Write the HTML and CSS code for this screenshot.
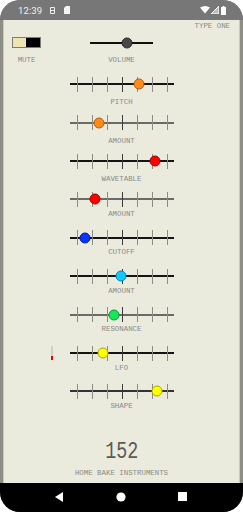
FILE: index.html
```html
<!DOCTYPE html>
<html>
<head>
<meta charset="utf-8">
<link rel="stylesheet" href="styles.css">
</head>
<body>
<div class="phone">
  <div class="status">
    <span class="time">12:39</span>
    <svg class="ic-debug" width="7" height="9" viewBox="0 0 7 9"><path d="M1.5 1.5h4M1 4.5h5M1.5 7.5h4M1.5 1.5v6M5.5 1.5v6" stroke="#eee" stroke-width="1" fill="none"/></svg>
    <svg class="ic-sd" width="6" height="8" viewBox="0 0 6 8"><path d="M2 0h4v8h-6v-6z" fill="#f4f4f4"/></svg>
    <span class="spacer"></span>
    <svg width="10" height="8" viewBox="0 0 10 8"><path d="M0 1.5Q5 -1.5 10 1.5L5 7.5Z" fill="#fff"/></svg>
    <svg class="ic-sig" width="8" height="8" viewBox="0 0 8 8"><path d="M8 0V8H0Z" fill="#bdbdbd"/><path d="M8 0V8H0Z" fill="none" stroke="#fff" stroke-width="1"/></svg>
    <svg class="ic-bat" width="5" height="9" viewBox="0 0 5 9"><path d="M1.5 0h2v1h1.5v8h-5v-8h1.5z" fill="#fff"/></svg>
  </div>
  <main class="app">
    <div class="type">TYPE ONE</div>
    <div class="toprow">
      <div class="mute">
        <div class="switch"><span class="on"></span><span class="off"></span></div>
        <div class="label">MUTE</div>
      </div>
      <div class="volume">
        <div class="vtrack"><span class="knob k-gray" style="left:37px"></span></div>
        <div class="label">VOLUME</div>
      </div>
    </div>
    <div class="sliders">
      <div class="slider first">
        <div class="track dark"><span class="knob k-orange" style="left:69px"></span></div>
        <div class="label">PITCH</div>
      </div>
      <div class="slider first">
        <div class="track light"><span class="knob k-orange" style="left:29px"></span></div>
        <div class="label">AMOUNT</div>
      </div>
      <div class="slider first">
        <div class="track dark"><span class="knob k-red" style="left:85px"></span></div>
        <div class="label">WAVETABLE</div>
      </div>
      <div class="slider">
        <div class="track light"><span class="knob k-red" style="left:25px"></span></div>
        <div class="label">AMOUNT</div>
      </div>
      <div class="slider">
        <div class="track dark"><span class="knob k-blue" style="left:15px"></span></div>
        <div class="label">CUTOFF</div>
      </div>
      <div class="slider">
        <div class="track dark"><span class="knob k-cyan" style="left:51px"></span></div>
        <div class="label">AMOUNT</div>
      </div>
      <div class="slider">
        <div class="track light"><span class="knob k-green" style="left:44px"></span></div>
        <div class="label">RESONANCE</div>
      </div>
      <div class="slider">
        <div class="track dark"><span class="lfo-meter"></span><span class="knob k-yellow" style="left:33px"></span></div>
        <div class="label">LFO</div>
      </div>
      <div class="slider">
        <div class="track mid"><span class="knob k-yellow" style="left:87px"></span></div>
        <div class="label">SHAPE</div>
      </div>
    </div>
    <div class="footer">
      <div class="bpm">152</div>
      <div class="brand">HOME BAKE INSTRUMENTS</div>
    </div>
  </main>
  <div class="nav">
    <svg width="8" height="10" viewBox="0 0 8 10"><path d="M8 0V10L0 5Z" fill="#fff"/></svg>
    <svg width="10" height="10" viewBox="0 0 10 10"><circle cx="5" cy="5" r="4.6" fill="#fff"/></svg>
    <svg width="9" height="9" viewBox="0 0 9 9"><rect width="9" height="9" fill="#fff"/></svg>
  </div>
</div>
</body>
</html>
```
FILE: styles.css
```css
* { box-sizing: border-box; }
html, body { margin: 0; padding: 0; background: #fff; }
.phone {
  width: 243px;
  height: 512px;
  border-radius: 20px;
  overflow: hidden;
  display: flex;
  flex-direction: column;
  background: #777;
}
.status {
  height: 20px;
  flex: none;
  background: #777;
  display: flex;
  align-items: center;
  padding: 0 17px 0 18px;
  color: #f2f2f2;
  font-family: Roboto, "Noto Sans", sans-serif;
  font-size: 9.5px;
}
.status .time { margin-right: 7px; letter-spacing: 0.1px; }
.status .ic-debug { margin-right: 8px; }
.status .spacer { flex: 1; }
.status .ic-sig { margin-left: 1px; margin-right: 2px; }
.status svg { display: block; }

.app {
  flex: none;
  height: 463px;
  background: #ebebdd;
  border-left: 3px solid #8e8e86;
  border-right: 3px solid #8e8e86;
  box-shadow: inset 1px 0 0 #c9c9bc, inset -1px 0 0 #c9c9bc;
  display: flex;
  flex-direction: column;
  font-family: "Liberation Mono", "DejaVu Sans Mono", monospace;
  font-size: 7.4px;
  color: #8a8a86;
}
.label, .type, .brand { line-height: 8px; white-space: nowrap; }
.type {
  text-align: right;
  padding-right: 10px;
  margin-top: 2px;
}
.toprow {
  display: grid;
  grid-template-columns: 1fr auto 1fr;
  height: 46.3px;
}
.mute {
  justify-self: start;
  margin-left: 9px;
  display: flex;
  flex-direction: column;
  align-items: center;
  width: 29px;
}
.switch {
  margin-top: 7px;
  width: 29px;
  height: 11px;
  border: 1px solid #7d7d74;
  display: flex;
}
.switch .on { flex: 1; background: #f0e4b2; }
.switch .off { flex: 1.1; background: #000; }
.mute .label { margin-top: 8px; }
.volume {
  display: flex;
  flex-direction: column;
  align-items: center;
}
.vtrack {
  position: relative;
  margin-top: 5px;
  width: 63px;
  height: 16px;
  background: linear-gradient(#111, #111) no-repeat 0 7px / 100% 2px;
}
.volume .label { margin-top: 5px; }

.sliders { display: flex; flex-direction: column; }
.slider {
  height: 38.4px;
  display: flex;
  flex-direction: column;
  align-items: center;
}
.slider .label { margin-top: 2.5px; }
.slider.first .label { margin-top: 6px; }
.track {
  position: relative;
  width: 104px;
  height: 16px;
  background: linear-gradient(var(--line), var(--line)) no-repeat 0 7px / 100% 2px;
}
.track.dark { --line: #141414; }
.track.mid { --line: #333; }
.track.light { --line: #6a6a66; }
.track::before {
  content: "";
  position: absolute;
  left: 7px;
  top: 0.5px;
  width: 91px;
  height: 15px;
  background: repeating-linear-gradient(to right, #8c8c86 0 1px, transparent 1px 15px);
}
.track::after {
  content: "";
  position: absolute;
  left: 52px;
  top: 0.5px;
  width: 1px;
  height: 15px;
  background: #3c3c3c;
}
.knob {
  position: absolute;
  top: 8px;
  width: 11px;
  height: 11px;
  border-radius: 50%;
  transform: translate(-50%, -50%);
  border: 1px solid rgba(0, 0, 0, 0.35);
  z-index: 1;
}
.k-gray { background: #484848; border-color: #2a2a2a; }
.k-orange { background: #ff8a1c; border-color: #b25e10; }
.k-red { background: #ff0000; border-color: #a80000; }
.k-blue { background: #0a32ff; border-color: #0018a0; }
.k-cyan { background: #12c8ff; border-color: #0a86ad; }
.k-green { background: #14e85a; border-color: #0a9a3a; }
.k-yellow { background: #ffff00; border-color: #a8a800; }
.lfo-meter {
  position: absolute;
  left: -19px;
  top: 1px;
  width: 2px;
  height: 14px;
  background: linear-gradient(#cfcfc6 0 70%, #ee0000 70%);
}

.footer {
  display: flex;
  flex-direction: column;
  align-items: center;
  margin-top: 18px;
}
.bpm {
  font-size: 23px;
  line-height: 24px;
  color: #5a5a58;
  transform: scaleX(0.8);
  font-weight: normal;
}
.brand { margin-top: 5px; }

.nav {
  flex: 1;
  background: #000;
  display: flex;
  align-items: center;
  padding: 0 56px 2px 55px;
  justify-content: space-between;
}
.nav svg { display: block; }
```
